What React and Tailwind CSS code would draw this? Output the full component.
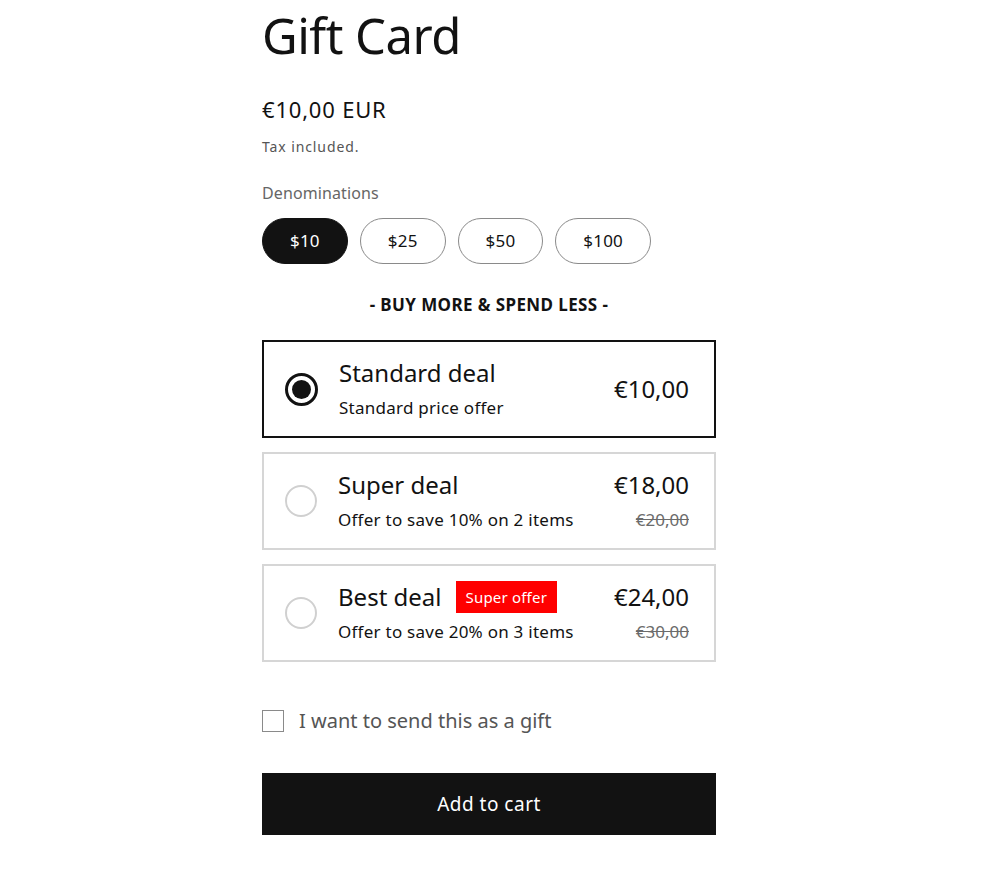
import React from "react";

function Radio({ selected }) {
  if (selected) {
    return (
      <div className="w-[33px] h-[33px] rounded-full border-[3px] border-[#121212] flex items-center justify-center shrink-0">
        <div className="w-[19px] h-[19px] rounded-full bg-[#121212]" />
      </div>
    );
  }
  return <div className="w-[32px] h-[32px] rounded-full border-2 border-[#d0d0d0] shrink-0" />;
}

function Deal({ selected, title, sub, price, old, badge }) {
  return (
    <div
      className={
        "h-[98px] flex items-center pl-[21px] pr-[25px] border-2 " +
        (selected ? "border-[#121212]" : "border-[#d6d6d6]")
      }
    >
      <Radio selected={selected} />
      <div className="ml-[21px] flex flex-col gap-2 flex-1">
        <div className="flex items-center h-[30px]">
          <span className="text-[24px] leading-[30px] text-[#121212]">{title}</span>
          {badge && (
            <span className="ml-[14px] h-[32px] px-[10px] bg-[#ff0000] text-white text-[15px] leading-[32px] tracking-[0.2px]">
              {badge}
            </span>
          )}
        </div>
        <div className="text-[17px] leading-[24px] tracking-[0.25px] text-[#121212]">{sub}</div>
      </div>
      <div className="flex flex-col items-end gap-2">
        <div className="text-[24px] leading-[30px] text-[#121212]">{price}</div>
        {old && (
          <div className="text-[17px] leading-[24px] text-[#6b6b6b] line-through">{old}</div>
        )}
      </div>
    </div>
  );
}

export default function App() {
  const pills = ["$10", "$25", "$50", "$100"];
  return (
    <div
      className="w-[996px] h-[876px] bg-white overflow-hidden"
      style={{ fontFamily: '"Noto Sans", sans-serif' }}
    >
      <div className="ml-[262px] w-[454px] flex flex-col">
        <h1 className="mt-[5px] text-[49px] leading-[60px] text-[#121212] tracking-[-0.5px]">Gift Card</h1>
        <div className="mt-[30px] text-[22px] leading-[28px] tracking-[0.8px] text-[#121212]">€10,00 EUR</div>
        <div className="mt-[14px] text-[14px] leading-[20px] tracking-[0.9px] text-[#555]">Tax included.</div>
        <div className="mt-[26px] text-[16px] leading-[20px] tracking-[0.1px] text-[#666]">Denominations</div>
        <div className="mt-[15px] flex gap-3">
          {pills.map((p, i) => (
            <div
              key={p}
              className={
                "h-[46px] px-[27px] rounded-full flex items-center justify-center text-[17px] tracking-[0.2px] " +
                (i === 0
                  ? "bg-[#121212] text-white border border-[#121212]"
                  : "border border-[#8a8a8a] text-[#121212]")
              }
            >
              {p}
            </div>
          ))}
        </div>
        <div className="mt-[31px] text-center font-bold text-[17px] leading-[20px] tracking-[0.4px] text-[#121212]">
          - BUY MORE &amp; SPEND LESS -
        </div>
        <div className="mt-[25px] flex flex-col gap-[14px]">
          <Deal selected title="Standard deal" sub="Standard price offer" price="€10,00" />
          <Deal title="Super deal" sub="Offer to save 10% on 2 items" price="€18,00" old="€20,00" />
          <Deal title="Best deal" badge="Super offer" sub="Offer to save 20% on 3 items" price="€24,00" old="€30,00" />
        </div>
        <div className="mt-[48px] flex items-center h-[22px]">
          <div className="w-[22px] h-[22px] border border-[#8a8a8a]" />
          <span className="ml-[15px] text-[20px] leading-[22px] text-[#555]">
            I want to send this as a gift
          </span>
        </div>
        <button className="mt-[41px] h-[62px] w-full bg-[#121212] text-white text-[19px] tracking-[0.5px]">
          Add to cart
        </button>
      </div>
    </div>
  );
}
